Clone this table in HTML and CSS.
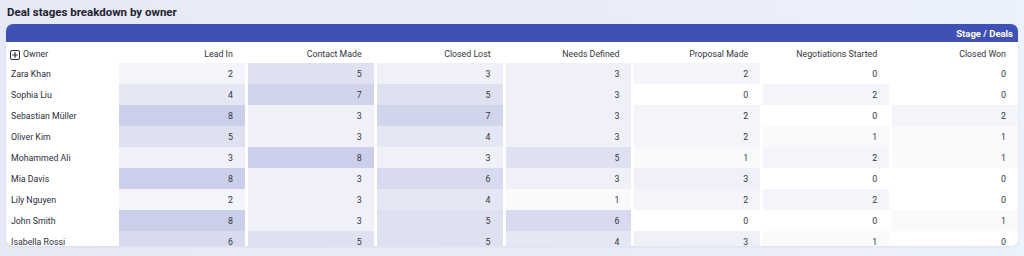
FILE: index.html
```html
<!DOCTYPE html>
<html lang="en">
<head>
	<meta charset="UTF-8">
	<title>Deal stages breakdown by owner</title>
	<link rel="stylesheet" href="styles.css">
</head>
<body>
	<div class="page">
		<h1 class="title">Deal stages breakdown by owner</h1>
		<div class="card">
			<div class="card_bar">Stage / Deals</div>
			<div class="pivot">
				<div class="row head">
					<div class="owner">
						<svg class="expand" width="10" height="10" viewBox="0 0 10 10"><rect x="0.5" y="0.5" width="9" height="9" rx="1.5" fill="none" stroke="#2b2f3a"/><path d="M5 2.3v5.4M2.3 5h5.4" stroke="#2b2f3a" stroke-width="1.2"/></svg>
						Owner
					</div>
					<div class="cell">Lead In</div>
					<div class="cell">Contact Made</div>
					<div class="cell">Closed Lost</div>
					<div class="cell">Needs Defined</div>
					<div class="cell">Proposal Made</div>
					<div class="cell">Negotiations Started</div>
					<div class="cell">Closed Won</div>
				</div>
				<div class="row">
					<div class="owner">Zara Khan</div>
					<div class="cell v2">2</div><div class="cell v5">5</div><div class="cell v3">3</div><div class="cell v3">3</div><div class="cell v2">2</div><div class="cell v0">0</div><div class="cell v0">0</div>
				</div>
				<div class="row">
					<div class="owner">Sophia Liu</div>
					<div class="cell v4">4</div><div class="cell v7">7</div><div class="cell v5">5</div><div class="cell v3">3</div><div class="cell v0">0</div><div class="cell v2">2</div><div class="cell v0">0</div>
				</div>
				<div class="row">
					<div class="owner">Sebastian Müller</div>
					<div class="cell v8">8</div><div class="cell v3">3</div><div class="cell v7">7</div><div class="cell v3">3</div><div class="cell v2">2</div><div class="cell v0">0</div><div class="cell v2">2</div>
				</div>
				<div class="row">
					<div class="owner">Oliver Kim</div>
					<div class="cell v5">5</div><div class="cell v3">3</div><div class="cell v4">4</div><div class="cell v3">3</div><div class="cell v2">2</div><div class="cell v1">1</div><div class="cell v1">1</div>
				</div>
				<div class="row">
					<div class="owner">Mohammed Ali</div>
					<div class="cell v3">3</div><div class="cell v8">8</div><div class="cell v3">3</div><div class="cell v5">5</div><div class="cell v1">1</div><div class="cell v2">2</div><div class="cell v1">1</div>
				</div>
				<div class="row">
					<div class="owner">Mia Davis</div>
					<div class="cell v8">8</div><div class="cell v3">3</div><div class="cell v6">6</div><div class="cell v3">3</div><div class="cell v3">3</div><div class="cell v0">0</div><div class="cell v0">0</div>
				</div>
				<div class="row">
					<div class="owner">Lily Nguyen</div>
					<div class="cell v2">2</div><div class="cell v3">3</div><div class="cell v4">4</div><div class="cell v1">1</div><div class="cell v2">2</div><div class="cell v2">2</div><div class="cell v0">0</div>
				</div>
				<div class="row">
					<div class="owner">John Smith</div>
					<div class="cell v8">8</div><div class="cell v3">3</div><div class="cell v5">5</div><div class="cell v6">6</div><div class="cell v0">0</div><div class="cell v0">0</div><div class="cell v1">1</div>
				</div>
				<div class="row">
					<div class="owner">Isabella Rossi</div>
					<div class="cell v6">6</div><div class="cell v5">5</div><div class="cell v5">5</div><div class="cell v4">4</div><div class="cell v3">3</div><div class="cell v1">1</div><div class="cell v0">0</div>
				</div>
			</div>
		</div>
	</div>
</body>
</html>
```

FILE: styles.css
```css
body,div,h1 {
	margin:0;
	padding:0;
}
body {
	width:1024px;
	height:256px;
	overflow:hidden;
	background:linear-gradient(90deg, #e8e9f6 0%, #eaedf8 60%, #ecf2fb 100%);
	font-family:Roboto, "Liberation Sans", sans-serif;
	color:#2b2f3a;
}
.page {
	padding:0 6px;
}
.title {
	height:24px;
	line-height:25px;
	padding-left:1px;
	font-size:11.5px;
	font-weight:bold;
	color:#1f2330;
}
.card {
	height:222px;
	background:#fff;
	border-radius:7px;
	overflow:hidden;
	box-shadow:0 1px 3px rgba(40,50,110,0.08);
}
.card_bar {
	height:18px;
	line-height:19px;
	padding-right:5px;
	background:#3f51b5;
	color:#fff;
	font-size:9.5px;
	font-weight:bold;
	text-align:right;
}
.row {
	display:grid;
	grid-template-columns:110px repeat(7, 1fr);
	column-gap:3px;
	height:21px;
	line-height:23px;
	font-size:8.8px;
}
.head {
	line-height:24px;
}
.owner {
	padding-left:5px;
	white-space:nowrap;
}
.head .owner {
	display:flex;
	align-items:center;
	gap:3px;
	padding-left:4px;
}
.expand {
	display:block;
	margin-top:1px;
}
.cell {
	padding-right:12px;
	text-align:right;
	color:#333640;
}
.v0 { background:#ffffff; }
.v1 { background:#fafafd; }
.v2 { background:#f4f5fa; }
.v3 { background:#eff0f8; }
.v4 { background:#e5e7f4; }
.v5 { background:#dfe1f1; }
.v6 { background:#d8dbef; }
.v7 { background:#d1d5ec; }
.v8 { background:#cbcfe9; }
```
